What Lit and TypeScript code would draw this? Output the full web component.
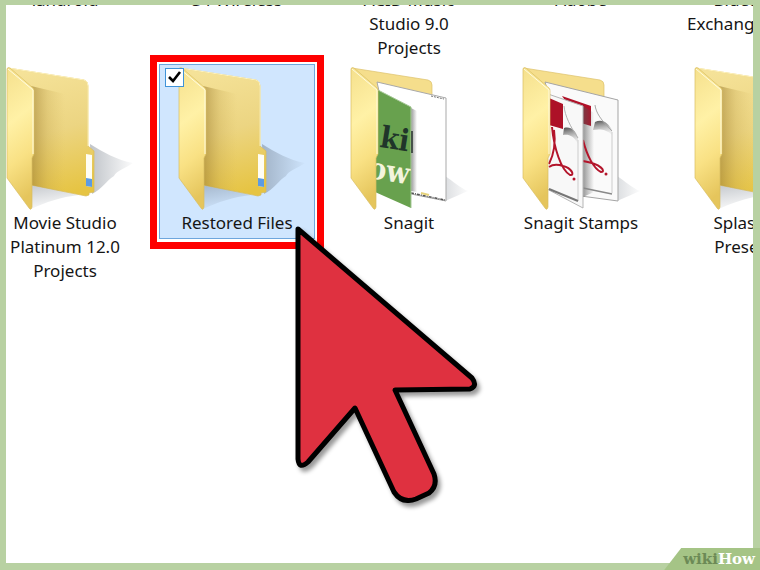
import { LitElement, html, svg, css, nothing } from "lit";
import { customElement, property } from "lit/decorators.js";

type Kind = "plain" | "snagit" | "stamps";

interface Folder {
  lines: string[];
  kind: Kind;
  selected?: boolean;
}

const UPPER: string[][] = [
  ["landroid"],
  ["S4 Wireless"],
  ["ACID Music", "Studio 9.0", "Projects"],
  ["Adobe"],
  ["Bluetooth", "Exchange Folder"],
];

const FOLDERS: Folder[] = [
  { lines: ["Movie Studio", "Platinum 12.0", "Projects"], kind: "plain" },
  { lines: ["Restored Files"], kind: "plain", selected: true },
  { lines: ["Snagit"], kind: "snagit" },
  { lines: ["Snagit Stamps"], kind: "stamps" },
  { lines: ["Splashtop", "Presenter"], kind: "plain" },
];

@customElement("folder-icon")
export class FolderIcon extends LitElement {
  @property() kind: Kind = "plain";

  static styles = css`
    :host {
      display: block;
    }
    .icon {
      display: block;
      width: 156px;
      height: 147px;
    }
    .logo {
      font: bold 30px "DejaVu Serif Condensed", "DejaVu Serif", serif;
    }
  `;

  private flap() {
    return svg`
      <path d="M20 5 Q20 3 23 4 L46 24 Q47 25 47 27 V90 L45 94 V143 Q44 147 42 144 L20 114 Z" fill="url(#flap)" stroke="#d9bd62" stroke-width=".7"/>
      <path d="M21 5 L46 26 V90" fill="none" stroke="#fffbe0" stroke-width="1"/>`;
  }

  private plain() {
    return svg`
      <path d="M103 80 C116 88 130 96 146 99 C139 104 129 107 127 112 C120 116 115 125 105 130 Z" fill="url(#shade)"/>
      <path d="M44 119 L92 131 C74 133 59 138 44 145 Z" fill="url(#shade2)"/>
      <path d="M21 4 L97 16 Q101 17 101 22 V82 L107 87 V128 L102 129 V131 L99 132 L44 121 Z" fill="url(#back)" stroke="#d8bb5a" stroke-width=".7"/>
      <path d="M21 4 L97 16 Q101 17 101 22 V82" fill="none" stroke="#fff3bd" stroke-width="1"/>
      <path d="M44 22 L78 30 V128 L44 121 Z" fill="url(#crease)"/>
      <path d="M99 90 L105 91 V123 L99 122 Z" fill="#fffef4"/>
      <path d="M99 114 L105 115 V123 L99 122 Z" fill="#5c9be4"/>
      ${this.flap()}`;
  }

  private snagit() {
    return svg`
      <path d="M114 112 C122 117 129 124 137 127 C130 130 123 133 114 137 Z" fill="url(#faint)"/>
      <path d="M21 4 L97 16 Q101 17 101 21 V60 H40 Z" fill="#f5de8c" stroke="#dcc26c" stroke-width=".7"/>
      <path d="M46 18 L115 34 V137 L70 128 Z" fill="#fff" stroke="#a9a9a9" stroke-width="1"/>
      <path d="M100 32 L113 35" stroke="#777" stroke-width="1" stroke-dasharray="2 1"/>
      <path d="M80 129 L114 136" stroke="#555" stroke-width="1.5" stroke-dasharray="3 1 1 1"/>
      <path d="M90 129 L98 131" stroke="#e6d27a" stroke-width="2"/>
      <path d="M80 44 L86 47 V128 L80 127 Z" fill="url(#pageshade)"/>
      <path d="M45 25 L80 43 V144 L44 128 Z" fill="#68a14e"/>
      <path d="M45 25 L80 43 V144" fill="none" stroke="#a6c897" stroke-width="1"/>
      <svg x="44" y="25" width="36" height="119" viewBox="44 25 36 119">
        <text class="logo" transform="rotate(9 49 83)" x="48" y="83" fill="#20352a">ki</text>
        <text class="logo" transform="rotate(9 56 117)" x="36" y="117" fill="#f3f4dc">ow</text>
      </svg>
      <path d="M81 67 V89" stroke="#24312b" stroke-width="1.5"/>
      ${this.flap()}`;
  }

  private stamps() {
    return svg`
      <path d="M114 112 C122 117 129 124 137 127 C130 130 123 133 114 137 Z" fill="url(#faint)"/>
      <path d="M21 4 L97 16 Q101 17 101 21 V60 H40 Z" fill="#f5de8c" stroke="#dcc26c" stroke-width=".7"/>
      <path d="M42 18 L115 36 V137 L78 132 Z" fill="#fafafa" stroke="#a5a5a5" stroke-width="1"/>
      <path d="M59 32 L88 42 V62 L78 59 Z" fill="#b01128"/>
      <path d="M92 58 C100 54 106 60 109 66 V71 C103 65 97 65 90 66 Z" fill="url(#fold)"/>
      <path d="M92 41 C93 49 98 56 109 67" fill="none" stroke="#a8a8a8" stroke-width="1"/>
      <path d="M109 68 V129" fill="none" stroke="#ccc" stroke-width="1"/>
      <path d="M80 42 L91 49 V128 L80 133 Z" fill="url(#pageshade)"/>
      <path d="M80 76 C84 92 91 105 98 108 C103 108 99 100 80 97" fill="none" stroke="#b3152b" stroke-width="2"/>
      <circle cx="103" cy="110" r="1.5" fill="#b3152b"/>
      <path d="M80 124 L109 130" stroke="#888" stroke-width="1.5"/>
      <path d="M45 30 L80 42 V144 L44 125 Z" fill="#f8f8f8" stroke="#b5b5b5" stroke-width="1"/>
      <path d="M46 34 L60 40 V65 L46 61 Z" fill="#ad1127"/>
      <path d="M61 64 C68 62 73 67 75 74 V80 C71 72 66 70 60 71 Z" fill="url(#fold)"/>
      <path d="M61 42 C62 52 67 62 75 74" fill="none" stroke="#b0b0b0" stroke-width="1"/>
      <path d="M75 76 V137" fill="none" stroke="#ccc" stroke-width="1"/>
      <path d="M49 63 C51 84 58 106 67 111 C72 112 69 104 60 102 C54 100 50 100 46 103 M51 66 C53 80 50 92 46 100" fill="none" stroke="#b3152b" stroke-width="2"/>
      <circle cx="71" cy="115" r="1.5" fill="#b3152b"/>
      <path d="M46 125 L75 137" stroke="#777" stroke-width="2"/>
      ${this.flap()}`;
  }

  render() {
    const body =
      this.kind === "snagit" ? this.snagit() : this.kind === "stamps" ? this.stamps() : this.plain();
    return html`<svg class="icon" viewBox="0 0 156 147" aria-hidden="true">
      <defs>
        <linearGradient id="flap" x1="0" y1="0" x2=".15" y2="1">
          <stop offset="0" stop-color="#f5e08d" />
          <stop offset=".4" stop-color="#fff1a6" />
          <stop offset=".7" stop-color="#f9e184" />
          <stop offset="1" stop-color="#e5c55c" />
        </linearGradient>
        <linearGradient id="back" x1=".4" y1="0" x2=".6" y2="1">
          <stop offset="0" stop-color="#f5e298" />
          <stop offset=".5" stop-color="#ecd582" />
          <stop offset="1" stop-color="#e6c443" />
        </linearGradient>
        <linearGradient id="crease">
          <stop offset="0" stop-color="#9c7d30" stop-opacity=".6" />
          <stop offset=".5" stop-color="#b5953f" stop-opacity=".22" />
          <stop offset="1" stop-color="#c9a94e" stop-opacity="0" />
        </linearGradient>
        <linearGradient id="shade">
          <stop offset="0" stop-color="#4f5a68" stop-opacity=".36" />
          <stop offset="1" stop-color="#4f5a68" stop-opacity=".02" />
        </linearGradient>
        <linearGradient id="faint">
          <stop offset="0" stop-color="#4f5a68" stop-opacity=".2" />
          <stop offset="1" stop-color="#4f5a68" stop-opacity=".02" />
        </linearGradient>
        <linearGradient id="shade2" x1="0" y1="0" x2=".3" y2="1">
          <stop offset="0" stop-color="#4f5a68" stop-opacity=".35" />
          <stop offset="1" stop-color="#4f5a68" stop-opacity=".03" />
        </linearGradient>
        <linearGradient id="pageshade">
          <stop offset="0" stop-color="#555" stop-opacity=".6" />
          <stop offset="1" stop-color="#555" stop-opacity="0" />
        </linearGradient>
        <linearGradient id="fold" x1="0" y1="0" x2=".2" y2="1">
          <stop offset="0" stop-color="#4c4c4c" />
          <stop offset="1" stop-color="#ddd" stop-opacity=".4" />
        </linearGradient>
      </defs>
      ${body}
    </svg>`;
  }
}

@customElement("app-root")
export class AppRoot extends LitElement {
  static styles = css`
    :host {
      display: block;
      font: 17px/24px "Noto Sans", "Open Sans", sans-serif;
      color: #151515;
    }
    .frame {
      position: relative;
      box-sizing: border-box;
      min-height: 100vh;
      padding: 5px 7px 7px 6px;
      background: #b8d1a2;
    }
    .view {
      box-sizing: border-box;
      min-height: calc(100vh - 12px);
      overflow: hidden;
      background: #fff;
    }
    .row {
      display: grid;
      grid-template-columns: repeat(5, 172px);
      margin: 0 0 4px -27px;
      padding: 0;
      list-style: none;
      text-align: center;
    }
    .upper {
      margin-top: -17px;
    }
    .line {
      display: block;
      white-space: nowrap;
    }
    .tile {
      position: relative;
      margin: 0 8px;
    }
    .caption {
      display: block;
    }
    .selected {
      align-self: start;
      padding-bottom: 4px;
      background: #d0e6fe;
      box-shadow: inset 0 0 0 1px #6ea6dd;
    }
    .ring {
      position: absolute;
      inset: -9px -9px -10px;
      border: 7px solid #fe0000;
      box-shadow: inset 0 0 0 2px #fff;
      pointer-events: none;
    }
    .check {
      position: absolute;
      left: 6px;
      top: 4px;
      z-index: 1;
      appearance: none;
      box-sizing: border-box;
      width: 19px;
      height: 19px;
      margin: 0;
      border: 1px solid #3f93d8;
      background: #fff;
    }
    .tick {
      position: absolute;
      left: 6px;
      top: 4px;
      z-index: 1;
      width: 19px;
      height: 19px;
      pointer-events: none;
    }
    .pointer {
      position: absolute;
      left: 131px;
      top: 158px;
      z-index: 2;
      width: 200px;
      height: 296px;
      pointer-events: none;
      filter: drop-shadow(3px 4px 2px #0006);
    }
    .brand {
      position: absolute;
      right: 0;
      bottom: 0;
      padding: 0 5px 0 19px;
      background: #a5c486;
      clip-path: polygon(17px 0, 100% 0, 100% 100%, 0 100%);
      font: bold 15px/22px "DejaVu Serif", serif;
      color: #fff;
      text-decoration: none;
    }
    .wiki {
      color: #6c8a56;
    }
  `;

  private lines(lines: string[]) {
    return lines.map((l) => html`<span class="line">${l}</span>`);
  }

  private tile(f: Folder) {
    const name = f.lines.join(" ");
    return html`<li class="tile ${f.selected ? "selected" : ""}">
      ${f.selected
        ? html`<input class="check" type="checkbox" aria-label=${name} checked />
            <svg class="tick" viewBox="0 0 19 19" aria-hidden="true">
              <path d="M4 9 L8 13 L15 4" fill="none" stroke="#000" stroke-width="2.6" />
            </svg>`
        : nothing}
      <folder-icon kind=${f.kind}></folder-icon>
      <span class="caption">${this.lines(f.lines)}</span>
      ${f.selected
        ? html`<span class="ring"></span>
            <svg class="pointer" viewBox="290 222 200 296" aria-hidden="true">
              <path
                d="M298 229 L472 378 Q478 386 470 389 L395 390 L434 474 Q438 486 429 493 L416 499 Q402 504 394 492 L355 408 L308 462 Q299 470 298 459 Z"
                fill="#df3140"
                stroke="#000"
                stroke-width="5"
                stroke-linejoin="round"
              />
            </svg>`
        : nothing}
    </li>`;
  }

  render() {
    return html`<main class="frame">
      <div class="view">
        <ul class="row upper">
          ${UPPER.map((u) => html`<li>${this.lines(u)}</li>`)}
        </ul>
        <ul class="row">
          ${FOLDERS.map((f) => this.tile(f))}
        </ul>
      </div>
      <a class="brand" href="#"><span class="wiki">wiki</span>How</a>
    </main>`;
  }
}
